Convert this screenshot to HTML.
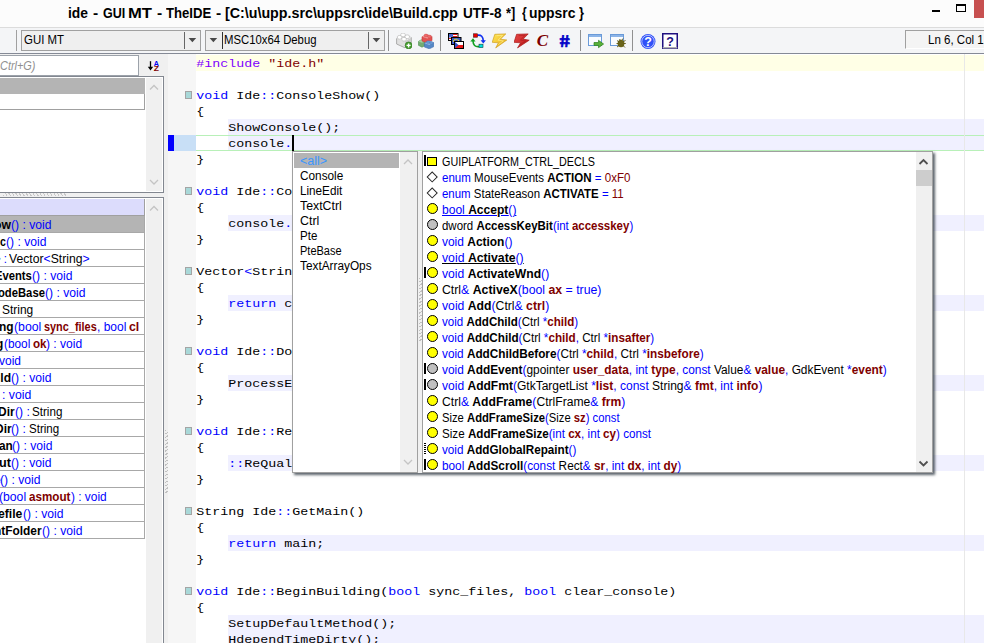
<!DOCTYPE html><html><head><meta charset="utf-8"><title>TheIDE</title><style>
*{box-sizing:border-box;margin:0;padding:0}
html,body{width:984px;height:643px;overflow:hidden;background:#fff}
body{position:relative;font-family:"Liberation Sans",sans-serif;font-size:12px;color:#000}
.abs{position:absolute}
.t{position:absolute;white-space:pre;line-height:16px;font-size:12px;transform-origin:0 0}
.t b{font-weight:bold}
.w{display:inline-block;vertical-align:top;white-space:pre;height:1px;overflow:visible}
.wi{display:inline-block;transform-origin:0 0;white-space:pre}
.code{font-family:"Liberation Mono",monospace;font-size:13.33px;line-height:16px;position:absolute;white-space:pre;left:196.3px;height:16px;color:#000;transform-origin:0 11.55px;transform:scaleY(.83);margin-top:.5px}
.kw{color:#0000ff}
.pp{color:#8000ff}
.str{color:#800000}
.hl{position:absolute;left:228px;right:0;height:16px;background:#f0f0ff}
.fold{position:absolute;left:185px;width:7px;height:8px;background:#a8d8d8;border:1px solid #a4a4a4}
.rowbg{position:absolute;left:-2px;width:147px;height:17px;border-bottom:1px solid #a8a8a8;border-right:1px solid #a8a8a8;background:#fff}
.clip{position:absolute;left:0;top:197px;width:144px;height:446px;overflow:hidden}
.bl{color:#0000ff}
.rd{color:#800000}
.ic{position:absolute;border-radius:50%;width:11px;height:11px;border:1px solid #000;left:427px}
.y{background:#ffff00}
.g{background:#c0c0c0}
.bar{position:absolute;left:424px;width:2px;height:11px;background:#000}
</style></head><body>
<div class="abs" style="left:0;top:0;width:984px;height:27px;background:#fcfcfc"></div>
<div class="t" style="left:68.00px;top:4.30px;font-size:14px;font-weight:bold;line-height:18px"><span class="w" style="width:20.00px"><span class="wi" id="f1" style="transform:scaleX(0.9884)">ide</span></span><span class="w" style="width:5.30px"> </span><span class="w" style="width:5.20px"><span class="wi" id="f2" style="transform:scaleX(1.1130)">-</span></span><span class="w" style="width:4.70px"> </span><span class="w" style="width:22.30px"><span class="wi" id="f3" style="transform:scaleX(0.8959)">GUI</span></span><span class="w" style="width:2.50px"> </span><span class="w" style="width:24.00px"><span class="wi" id="f4" style="transform:scaleX(1.1870)">MT</span></span><span class="w" style="width:5.00px"> </span><span class="w" style="width:5.20px"><span class="wi" id="f5" style="transform:scaleX(1.1130)">-</span></span><span class="w" style="width:4.10px"> </span><span class="w" style="width:45.20px"><span class="wi" id="f6" style="transform:scaleX(0.9371)">TheIDE</span></span><span class="w" style="width:4.30px"> </span><span class="w" style="width:5.20px"><span class="wi" id="f7" style="transform:scaleX(1.1130)">-</span></span><span class="w" style="width:4.50px"> </span><span class="w" style="width:232.80px"><span class="wi" id="f8" style="transform:scaleX(1.0180)">[C:\u\upp.src\uppsrc\ide\Build.cpp</span></span><span class="w" style="width:4.70px"> </span><span class="w" style="width:38.50px"><span class="wi" id="f9" style="transform:scaleX(0.9705)">UTF-8</span></span><span class="w" style="width:5.00px"> </span><span class="w" style="width:9.20px"><span class="wi" id="f10" style="transform:scaleX(0.9086)">*]</span></span><span class="w" style="width:6.30px"> </span><span class="w" style="width:4.70px"><span class="wi" id="f11" style="transform:scaleX(0.8619)">{</span></span><span class="w" style="width:2.60px"> </span><span class="w" style="width:46.40px"><span class="wi" id="f12" style="transform:scaleX(0.9938)">uppsrc</span></span><span class="w" style="width:3.80px"> </span><span class="w" style="width:5.00px"><span class="wi" id="f13" style="transform:scaleX(0.9169)">}</span></span></div>
<div class="abs" style="left:932px;top:10px;width:8px;height:2px;background:#000"></div>
<div class="abs" style="left:956px;top:4px;width:10px;height:8px;border:1px solid #000;border-top-width:2px"></div>
<div class="abs" style="left:974px;top:0;width:10px;height:18px;background:#c75050"></div>
<div class="abs" style="left:0;top:27px;width:984px;height:27px;background:#f4f5f7;border-top:1px solid #dcdcdc"></div>
<div class="abs" style="left:0;top:53px;width:984px;height:1px;background:#858a96"></div>
<div class="abs" style="left:16px;top:30px;width:1px;height:21px;background:#a0a0a0"></div>
<div class="abs" style="left:21px;top:30px;width:180px;height:21px;border:1px solid #a0a0a0;background:#efefef"></div>
<div class="t" id="f14" style="left:23.60px;top:32.00px;transform:scaleX(0.9143);font-size:12.5px">GUI MT</div>
<div class="abs" style="left:184px;top:32px;width:1px;height:17px;background:#666"></div>
<svg class="abs" style="left:188px;top:37px" width="9" height="6" viewBox="0 0 9 6"><path d="M.6 .9h7.6L4.4 5.2z" fill="#4a4a4a"/></svg>
<div class="abs" style="left:205px;top:30px;width:180px;height:21px;border:1px solid #a0a0a0;background:#efefef"></div>
<svg class="abs" style="left:209px;top:37px" width="9" height="6" viewBox="0 0 9 6"><path d="M.6 .9h7.6L4.4 5.2z" fill="#4a4a4a"/></svg>
<div class="abs" style="left:222px;top:32px;width:1px;height:17px;background:#303030"></div>
<div class="t" id="f15" style="left:224.00px;top:32.00px;transform:scaleX(0.9055);font-size:12.5px">MSC10x64 Debug</div>
<div class="abs" style="left:368px;top:32px;width:1px;height:17px;background:#666"></div>
<svg class="abs" style="left:371.6px;top:37px" width="9" height="6" viewBox="0 0 9 6"><path d="M.6 .9h7.6L4.4 5.2z" fill="#4a4a4a"/></svg>
<div class="abs" style="left:388px;top:30px;width:1px;height:21px;background:#909090"></div>
<div class="abs" style="left:440px;top:30px;width:1px;height:21px;background:#909090"></div>
<div class="abs" style="left:580px;top:30px;width:1px;height:21px;background:#909090"></div>
<div class="abs" style="left:632px;top:30px;width:1px;height:21px;background:#909090"></div>
<svg class="abs" style="left:396px;top:33px" width="16" height="16" viewBox="0 0 16 16"><path d="M.6 5.6 6.6 2.2 15.4 4.6 15.4 10 9 14.8 .6 11z" fill="#e0e0e0" stroke="#a4a4a4" stroke-width=".9"/><path d="M.6 5.6 6.6 2.2 15.4 4.6 9 8.6z" fill="#f2f2f2"/><path d="M9 8.6 15.4 4.6 15.4 10 9 14.8z" fill="#cdcdcd"/><g fill="#fff" stroke="#b0b0b0" stroke-width=".6"><path d="M4.8 2.6v-1.3a2.2 1.2 0 0 1 4.4 0v1.3a2.2 1.2 0 0 1-4.4 0z"/><path d="M1.4 5v-1.3a2.2 1.2 0 0 1 4.4 0V5a2.2 1.2 0 0 1-4.4 0z"/><path d="M9 4.4v-1.3a2.2 1.2 0 0 1 4.4 0v1.3a2.2 1.2 0 0 1-4.4 0z"/><path d="M5.8 6.9v-1.3a2.2 1.2 0 0 1 4.4 0v1.3a2.2 1.2 0 0 1-4.4 0z"/></g><circle cx="12.6" cy="12.4" r="3.4" fill="#48a030" stroke="#2f7a20" stroke-width=".7"/><path d="M10.6 12.4h4M12.6 10.4v4" stroke="#fff" stroke-width="1.4"/></svg>
<svg class="abs" style="left:418px;top:33px" width="16" height="16" viewBox="0 0 16 16"><path d="M.3 8.6 3.2 6.8 7 8.2 7 12.6 4 14.2 .3 12.2z" fill="#74ac72" stroke="#4f8f50" stroke-width=".6"/><path d="M.3 8.6 3.2 6.8 7 8.2 4 9.8z" fill="#a4d0a0"/><path d="M4 3.8 8.6 1.6 14 3.4 14 7.6 9.4 10 4 8z" fill="#e25252" stroke="#c03c3c" stroke-width=".6"/><path d="M4 3.8 8.6 1.6 14 3.4 9.4 5.6z" fill="#f29a9a"/><path d="M6.2 3v-1a1.7 .9 0 0 1 3.4 0v1a1.7 .9 0 0 1-3.4 0zM9.6 4v-1a1.7 .9 0 0 1 3.4 0v1a1.7 .9 0 0 1-3.4 0z" fill="#f06a6a" stroke="#c84444" stroke-width=".4"/><path d="M6.4 10.2 11 8 15.8 9.6 15.8 13.6 11.4 15.8 6.4 14z" fill="#5688c6" stroke="#3c6cab" stroke-width=".6"/><path d="M6.4 10.2 11 8 15.8 9.6 11.4 12z" fill="#94bae6"/><path d="M8.4 9.6v-.9a1.6 .8 0 0 1 3.2 0v.9a1.6 .8 0 0 1-3.2 0zM11.6 10.6v-.9a1.6 .8 0 0 1 3.2 0v.9a1.6 .8 0 0 1-3.2 0z" fill="#6a9ad6" stroke="#4474b0" stroke-width=".4"/></svg>
<svg class="abs" style="left:448px;top:33px" width="16" height="16" viewBox="0 0 16 16"><rect x=".5" y=".5" width="9.5" height="7" fill="#fff" stroke="#000"/><rect x="1" y="1" width="4" height="3.5" fill="#3050c8"/><path d="M1.5 2h3M1.5 3.4h3" stroke="#dfe6ff" stroke-width=".6" stroke-dasharray=".7 .6"/><rect x="5" y="1" width="4.5" height="1" fill="#e02020"/><rect x="5" y="3" width="4.5" height="1" fill="#e02020"/><rect x="1" y="5" width="8.5" height="1" fill="#e02020"/><rect x="3.5" y="4.5" width="9.5" height="7" fill="#3858c8" stroke="#000"/><path d="M5.3 8.6 Q8.2 3.6 11.3 8.6" fill="none" stroke="#f4e428" stroke-width="1.3" stroke-dasharray="1.3 .7"/><rect x="6.5" y="8.5" width="9" height="7" fill="#fff" stroke="#000"/><rect x="7" y="12" width="8" height="3" fill="#e81818"/><path d="M7 9 10.5 12 7 15z" fill="#3050c8"/></svg>
<svg class="abs" style="left:470px;top:33px" width="16" height="16" viewBox="0 0 16 16"><path d="M7.5 2.2 Q13 1.5 13.3 8" fill="none" stroke="#1030f0" stroke-width="1.6"/><path d="M10.6 7.2 13.3 10.6 15.9 7.2z" fill="#1030f0"/><path d="M9 13.6 Q3.2 14.2 3 8" fill="none" stroke="#10a020" stroke-width="1.6"/><path d="M.3 8.6 3 5.2 5.6 8.6z" fill="#10a020"/><rect x="3.5" y=".8" width="4" height="3.4" fill="#f00000" stroke="#401010" stroke-width=".6"/><rect x="9" y="11.2" width="4" height="3.4" fill="#00e0e0" stroke="#104040" stroke-width=".6"/></svg>
<svg class="abs" style="left:492px;top:33px" width="16" height="16" viewBox="0 0 16 16"><defs><linearGradient id="gy" x1="0" y1="0" x2="1" y2="1"><stop offset="0" stop-color="#ffe858"/><stop offset="1" stop-color="#e8a818"/></linearGradient></defs><path d="M2.8 1.3 13.8 .9 8.4 6.2 14.8 7 3.7 14.9 6.4 9.8 .2 9.3z" fill="url(#gy)" stroke="#d0a020" stroke-width=".7"/><path d="M4.6 2.6 10.6 2.4 6 7.2 11.4 7.9 6.2 11.6" fill="none" stroke="#fff4a0" stroke-width=".7" opacity=".8"/></svg>
<svg class="abs" style="left:514px;top:33px" width="16" height="16" viewBox="0 0 16 16"><defs><linearGradient id="gr" x1="0" y1="0" x2="1" y2="1"><stop offset="0" stop-color="#e84848"/><stop offset="1" stop-color="#b81818"/></linearGradient></defs><path d="M2.6 1.3 14.2 .9 9.1 6.1 15.2 7.2 3.5 14.9 6.6 9.8 0 9.3z" fill="url(#gr)" stroke="#a81818" stroke-width=".7"/><path d="M4.6 2.6 10.8 2.4 6.4 7.2 11.8 8 6.2 11.6" fill="none" stroke="#a01010" stroke-width=".6" opacity=".7"/></svg>
<div class="abs" style="left:536.7px;top:30.7px;font-family:'Liberation Serif',serif;font-weight:bold;font-style:italic;font-size:17px;line-height:20px;color:#7c0000">C</div>
<div class="abs" style="left:559.9px;top:31.8px;font-family:'Liberation Sans',sans-serif;font-weight:bold;font-size:17px;line-height:20px;color:#0000c8;-webkit-text-stroke:.6px #0000c8;transform:skewX(8deg) scaleX(1.1);transform-origin:50% 50%">#</div>
<svg class="abs" style="left:588px;top:33px" width="16" height="16" viewBox="0 0 16 16"><rect x=".5" y="1.5" width="13" height="11" fill="#fafcff" stroke="#6a9ad8"/><rect x="1" y="2" width="12" height="2" fill="#8cb4e8"/><path d="M6 9.5h4.5V7.3L15.6 11l-5.1 3.7v-2.2H6z" fill="#58b038" stroke="#2c8020" stroke-width=".7"/></svg>
<svg class="abs" style="left:610px;top:33px" width="16" height="16" viewBox="0 0 16 16"><rect x=".5" y="1.5" width="13" height="11" fill="#fafcff" stroke="#6a9ad8"/><rect x="1" y="2" width="12" height="2" fill="#8cb4e8"/><ellipse cx="11" cy="10.5" rx="3.4" ry="3.8" fill="#6a6418"/><path d="M7 7.5l2 1.5M15.5 7l-2 2M6.5 10.5h2M13.5 10.5h2.3M7 14l2-1.5M15 14.5l-2-2M9.5 6l1 1.5M13 5.5l-1 1.5" stroke="#5a5410" stroke-width=".9" fill="none"/></svg>
<svg class="abs" style="left:640px;top:32.5px" width="16" height="17" viewBox="0 0 16 17"><circle cx="8" cy="8.5" r="7.5" fill="#3050f8"/><circle cx="8" cy="8.5" r="6.2" fill="none" stroke="#e8ecff" stroke-width=".7"/><text x="8" y="13" text-anchor="middle" font-family="Liberation Sans,sans-serif" font-weight="bold" font-size="12.5" fill="#fff">?</text></svg>
<svg class="abs" style="left:662px;top:33px" width="16" height="16" viewBox="0 0 16 16"><rect x=".75" y=".75" width="14.5" height="14.5" fill="#fff" stroke="#201080" stroke-width="1.5"/><rect x=".75" y="14" width="14.5" height="1.5" fill="#b0b0b0"/><text x="8" y="12.6" text-anchor="middle" font-family="Liberation Sans,sans-serif" font-weight="bold" font-size="12.5" fill="#201080">?</text></svg>

<div class="abs" style="left:905px;top:30px;width:90px;height:19px;border:1px solid #a0a0a0;border-right:0;border-bottom-color:#fff;background:#f4f4f4"></div>
<div class="t" id="f16" style="left:927.50px;top:31.50px;transform:scaleX(0.9225);font-size:12.5px">Ln 6, Col 12</div>
<div class="abs" style="left:0;top:54px;width:168px;height:589px;background:#f0f0f0"></div>
<div class="abs" style="left:-2px;top:55px;width:141px;height:21px;border:1px solid #9ca2aa;background:#fff"></div>
<div class="t" id="f17" style="left:-0.50px;top:57.50px;transform:scaleX(0.9103);font-style:italic;color:#909090">Ctrl+G)</div>
<svg class="abs" style="left:147px;top:59.7px" width="14" height="12" viewBox="0 0 14 12"><path d="M3.5 1.2v8" stroke="#000" stroke-width="1.3"/><path d="M.8 6.8 3.5 10.4 6.2 6.8z" fill="#000"/><text x="6.8" y="5.6" font-family="Liberation Sans,sans-serif" font-weight="bold" font-size="6.8" fill="#0000f0" textLength="5.2" lengthAdjust="spacingAndGlyphs">A</text><text x="6.8" y="10.9" font-family="Liberation Sans,sans-serif" font-weight="bold" font-size="6.8" fill="#800000" textLength="5.2" lengthAdjust="spacingAndGlyphs">Z</text></svg>

<div class="abs" style="left:-2px;top:76px;width:166px;height:117px;border:1px solid #828790;background:#fff"></div>
<div class="abs" style="left:0;top:78px;width:145px;height:16px;background:#b4b4b4"></div>
<div class="abs" style="left:-2px;top:94px;width:147px;height:16px;border:1px solid #a0a0a0;border-top:0;background:#fff"></div>
<div class="abs" style="left:146px;top:78px;width:16px;height:113px;background:#f0f0f0"></div>
<div class="abs" style="left:3px;top:193px;width:63px;height:3px;background:repeating-linear-gradient(60deg,#c8c8c8 0 1px,transparent 1px 3px)"></div>
<div class="abs" style="left:-2px;top:197px;width:166px;height:450px;border:1px solid #828790;background:#fff"></div>
<div class="abs" style="left:146px;top:199px;width:16px;height:445px;background:#f0f0f0"></div>
<div class="abs" style="left:-2px;top:199px;width:147px;height:17px;background:#dcdcfc;border-right:1px solid #a0a0a0;border-bottom:1px solid #a0a0a0"></div>
<div class="rowbg" style="top:216px;background:#b4b4b4"></div>
<div class="rowbg" style="top:233px"></div>
<div class="rowbg" style="top:250px"></div>
<div class="rowbg" style="top:267px"></div>
<div class="rowbg" style="top:284px"></div>
<div class="rowbg" style="top:301px"></div>
<div class="rowbg" style="top:318px"></div>
<div class="rowbg" style="top:335px"></div>
<div class="rowbg" style="top:352px"></div>
<div class="rowbg" style="top:369px"></div>
<div class="rowbg" style="top:386px"></div>
<div class="rowbg" style="top:403px"></div>
<div class="rowbg" style="top:420px"></div>
<div class="rowbg" style="top:437px"></div>
<div class="rowbg" style="top:454px"></div>
<div class="rowbg" style="top:471px"></div>
<div class="rowbg" style="top:488px"></div>
<div class="rowbg" style="top:505px"></div>
<div class="rowbg" style="top:522px"></div>
<div class="clip">
<div class="t" style="left:-5.80px;top:20.00px;"><span class="w" style="width:16.90px"><span class="wi" id="f18" style="transform:scaleX(1.0137)"><b>ow</b></span></span><span class="w" style="width:40.40px"><span class="wi" id="f19" style="transform:scaleX(1.0096)"><span class="bl">() : void</span></span></span></div>
<div class="t" style="left:0.20px;top:37.00px;"><span class="w" style="width:5.90px"><span class="wi" id="f20" style="transform:scaleX(0.8822)"><b>c</b></span></span><span class="w" style="width:40.40px"><span class="wi" id="f21" style="transform:scaleX(1.0096)"><span class="bl">() : void</span></span></span></div>
<div class="t" style="left:-6.50px;top:54.00px;"><span class="w" style="width:13.00px"><span class="wi" id="f22" style="transform:scaleX(0.9498)"><span class="bl">&gt; :</span></span></span><span class="w" style="width:2.80px"> </span><span class="w" style="width:80.70px"><span class="wi" id="f23" style="transform:scaleX(1.0161)">Vector<span class="bl">&lt;</span>String<span class="bl">&gt;</span></span></span></div>
<div class="t" style="left:-5.20px;top:71.00px;"><span class="w" style="width:36.80px"><span class="wi" id="f24" style="transform:scaleX(0.9350)"><b>Events</b></span></span><span class="w" style="width:40.40px"><span class="wi" id="f25" style="transform:scaleX(1.0096)"><span class="bl">() : void</span></span></span></div>
<div class="t" style="left:-2.30px;top:88.00px;"><span class="w" style="width:46.90px"><span class="wi" id="f26" style="transform:scaleX(0.9374)"><b>odeBase</b></span></span><span class="w" style="width:40.40px"><span class="wi" id="f27" style="transform:scaleX(1.0096)"><span class="bl">() : void</span></span></span></div>
<div class="t" style="left:1.80px;top:105.00px;"><span class="w" style="width:31.20px"><span class="wi" id="f28" style="transform:scaleX(0.9949)">String</span></span></div>
<div class="t" style="left:-0.60px;top:122.00px;"><span class="w" style="width:14.60px"><span class="wi" id="f29" style="transform:scaleX(0.9951)"><b>ng</b></span></span><span class="w" style="width:27.30px"><span class="wi" id="f30" style="transform:scaleX(1.0230)"><span class="bl">(bool</span></span></span><span class="w" style="width:3.00px"> </span><span class="w" style="width:52.70px"><span class="wi" id="f31" style="transform:scaleX(0.9079)"><b class="rd">sync_files</b></span></span><span class="w" style="width:29.30px"><span class="wi" id="f32" style="transform:scaleX(0.9980)"><span class="bl">, bool</span></span></span><span class="w" style="width:3.00px"> </span><span class="w" style="width:10.30px"><span class="wi" id="f33" style="transform:scaleX(1.0284)"><b class="rd">cl</b></span></span></div>
<div class="t" style="left:-3.60px;top:139.00px;"><span class="w" style="width:7.30px"><span class="wi" id="f34" style="transform:scaleX(0.9940)"><b>g</b></span></span><span class="w" style="width:26.30px"><span class="wi" id="f35" style="transform:scaleX(0.9855)"><span class="bl">(bool</span></span></span><span class="w" style="width:2.70px"> </span><span class="w" style="width:13.60px"><span class="wi" id="f36" style="transform:scaleX(0.9703)"><b class="rd">ok</b></span></span><span class="w" style="width:36.20px"><span class="wi" id="f37" style="transform:scaleX(1.0051)"><span class="bl">) : void</span></span></span></div>
<div class="t" style="left:-1.00px;top:156.00px;"><span class="w" style="width:22.00px"><span class="wi" id="f38" style="transform:scaleX(0.9993)"><span class="bl">void</span></span></span></div>
<div class="t" style="left:-3.50px;top:173.00px;"><span class="w" style="width:14.10px"><span class="wi" id="f39" style="transform:scaleX(1.0071)"><b>ild</b></span></span><span class="w" style="width:40.40px"><span class="wi" id="f40" style="transform:scaleX(1.0096)"><span class="bl">() : void</span></span></span></div>
<div class="t" style="left:1.50px;top:190.00px;"><span class="w" style="width:29.30px"><span class="wi" id="f41" style="transform:scaleX(1.0214)"><span class="bl">: void</span></span></span></div>
<div class="t" style="left:-1.90px;top:207.00px;"><span class="w" style="width:16.60px"><span class="wi" id="f42" style="transform:scaleX(0.9957)"><b>Dir</b></span></span><span class="w" style="width:14.80px"><span class="wi" id="f43" style="transform:scaleX(1.0087)"><span class="bl">() :</span></span></span><span class="w" style="width:2.80px"> </span><span class="w" style="width:30.40px"><span class="wi" id="f44" style="transform:scaleX(0.9694)">String</span></span></div>
<div class="t" style="left:-5.40px;top:224.00px;"><span class="w" style="width:16.60px"><span class="wi" id="f45" style="transform:scaleX(0.9957)"><b>Dir</b></span></span><span class="w" style="width:14.80px"><span class="wi" id="f46" style="transform:scaleX(1.0087)"><span class="bl">() :</span></span></span><span class="w" style="width:2.80px"> </span><span class="w" style="width:30.20px"><span class="wi" id="f47" style="transform:scaleX(0.9630)">String</span></span></div>
<div class="t" style="left:-1.50px;top:241.00px;"><span class="w" style="width:13.80px"><span class="wi" id="f48" style="transform:scaleX(0.9846)"><b>an</b></span></span><span class="w" style="width:40.40px"><span class="wi" id="f49" style="transform:scaleX(1.0096)"><span class="bl">() : void</span></span></span></div>
<div class="t" style="left:-1.30px;top:258.00px;"><span class="w" style="width:11.90px"><span class="wi" id="f50" style="transform:scaleX(1.0505)"><b>ut</b></span></span><span class="w" style="width:40.40px"><span class="wi" id="f51" style="transform:scaleX(1.0096)"><span class="bl">() : void</span></span></span></div>
<div class="t" style="left:-6.20px;top:275.00px;"><span class="w" style="width:6.60px"><span class="wi" id="f52" style="transform:scaleX(0.9869)"><b>e</b></span></span><span class="w" style="width:40.40px"><span class="wi" id="f53" style="transform:scaleX(1.0096)"><span class="bl">() : void</span></span></span></div>
<div class="t" style="left:-0.60px;top:292.00px;"><span class="w" style="width:27.10px"><span class="wi" id="f54" style="transform:scaleX(1.0155)"><span class="bl">(bool</span></span></span><span class="w" style="width:2.50px"> </span><span class="w" style="width:41.50px"><span class="wi" id="f55" style="transform:scaleX(0.9722)"><b class="rd">asmout</b></span></span><span class="w" style="width:35.70px"><span class="wi" id="f56" style="transform:scaleX(0.9912)"><span class="bl">) : void</span></span></span></div>
<div class="t" style="left:-1.60px;top:309.00px;"><span class="w" style="width:24.40px"><span class="wi" id="f57" style="transform:scaleX(1.0160)"><b>efile</b></span></span><span class="w" style="width:40.40px"><span class="wi" id="f58" style="transform:scaleX(1.0096)"><span class="bl">() : void</span></span></span></div>
<div class="t" style="left:-5.90px;top:326.00px;"><span class="w" style="width:47.60px"><span class="wi" id="f59" style="transform:scaleX(0.9917)"><b>ntFolder</b></span></span><span class="w" style="width:40.40px"><span class="wi" id="f60" style="transform:scaleX(1.0096)"><span class="bl">() : void</span></span></span></div>
</div>
<div class="abs" style="left:196px;top:54px;width:788px;height:589px;background:#fff"></div>
<div class="abs" style="left:165px;top:430px;width:3px;height:63px;background:repeating-linear-gradient(150deg,#c0c0c0 0 1px,transparent 1px 3px)"></div>
<div class="abs" style="left:168px;top:54px;width:28px;height:589px;background:#f6f6f6"></div>
<div class="abs" style="left:196px;top:55px;width:788px;height:16px;background:#ffffe6"></div>
<div class="code" style="top:55px"><span class="pp">#include</span> <span class="str">"ide.h"</span></div>
<div class="fold" style="top:91px"></div>
<div class="code" style="top:87px"><span class="kw">void</span> Ide<span class="kw">::</span>ConsoleShow()</div>
<div class="code" style="top:103px">{</div>
<div class="hl" style="top:119px"></div>
<div class="code" style="top:119px">    ShowConsole();</div>
<div class="hl" style="top:135px"></div>
<div class="code" style="top:135px">    console<span class="kw">.</span></div>
<div class="code" style="top:151px">}</div>
<div class="fold" style="top:187px"></div>
<div class="code" style="top:183px"><span class="kw">void</span> Ide<span class="kw">::</span>Co</div>
<div class="code" style="top:199px">{</div>
<div class="hl" style="top:215px"></div>
<div class="code" style="top:215px">    console<span class="kw">.</span></div>
<div class="code" style="top:231px">}</div>
<div class="fold" style="top:267px"></div>
<div class="code" style="top:263px">Vector<span class="kw">&lt;</span>Strin</div>
<div class="code" style="top:279px">{</div>
<div class="hl" style="top:295px"></div>
<div class="code" style="top:295px">    <span class="kw">return</span> c</div>
<div class="code" style="top:311px">}</div>
<div class="fold" style="top:347px"></div>
<div class="code" style="top:343px"><span class="kw">void</span> Ide<span class="kw">::</span>Do</div>
<div class="code" style="top:359px">{</div>
<div class="hl" style="top:375px"></div>
<div class="code" style="top:375px">    ProcessE</div>
<div class="code" style="top:391px">}</div>
<div class="fold" style="top:427px"></div>
<div class="code" style="top:423px"><span class="kw">void</span> Ide<span class="kw">::</span>Re</div>
<div class="code" style="top:439px">{</div>
<div class="hl" style="top:455px"></div>
<div class="code" style="top:455px">    <span class="kw">::</span>ReQual</div>
<div class="code" style="top:471px">}</div>
<div class="fold" style="top:507px"></div>
<div class="code" style="top:503px">String Ide<span class="kw">::</span>GetMain()</div>
<div class="code" style="top:519px">{</div>
<div class="hl" style="top:535px"></div>
<div class="code" style="top:535px">    <span class="kw">return</span> main;</div>
<div class="code" style="top:551px">}</div>
<div class="fold" style="top:587px"></div>
<div class="code" style="top:583px"><span class="kw">void</span> Ide<span class="kw">::</span>BeginBuilding(<span class="kw">bool</span> sync_files, <span class="kw">bool</span> clear_console)</div>
<div class="code" style="top:599px">{</div>
<div class="hl" style="top:615px"></div>
<div class="code" style="top:615px">    SetupDefaultMethod();</div>
<div class="hl" style="top:631px"></div>
<div class="code" style="top:631px">    HdependTimeDirty();</div>
<div class="abs" style="left:196px;top:135px;width:788px;height:1px;background:#b8f0b8"></div>
<div class="abs" style="left:196px;top:150px;width:788px;height:1px;background:#b8f0b8"></div>
<div class="abs" style="left:174px;top:135px;width:22px;height:16px;background:#c8dff6"></div>
<div class="abs" style="left:168px;top:135px;width:6px;height:16px;background:#0000ff"></div>
<div class="abs" style="left:292px;top:135px;width:2px;height:16px;background:#000"></div>
<div class="abs" style="left:964px;top:54px;width:1px;height:589px;background:#e8e8e8"></div>
<div class="abs" style="left:292px;top:151px;width:641px;height:322px;background:#f0f0f0;box-shadow:2px 2px 2.5px rgba(50,60,70,.8)"></div>
<div class="abs" style="left:292px;top:151px;width:126px;height:322px;background:#fff;border:1px solid #a0a0a0"></div>
<div class="abs" style="left:400px;top:152px;width:17px;height:320px;background:#f0f0f0"></div>
<div class="abs" style="left:294px;top:153px;width:105px;height:15px;background:#b4b4b4"></div>
<div class="abs" style="left:419px;top:278px;width:3px;height:63px;background:repeating-linear-gradient(150deg,#c0c0c0 0 1px,transparent 1px 3px)"></div>
<div class="t" id="f61" style="left:300.20px;top:154.00px;transform:scaleX(1.0372);line-height:15px"><span style="color:#3a96ff">&lt;all&gt;</span></div>
<div class="t" id="f62" style="left:300.20px;top:169.00px;transform:scaleX(0.9834);line-height:15px">Console</div>
<div class="t" id="f63" style="left:300.20px;top:184.00px;transform:scaleX(0.9752);line-height:15px">LineEdit</div>
<div class="t" id="f64" style="left:300.20px;top:199.00px;transform:scaleX(1.0277);line-height:15px">TextCtrl</div>
<div class="t" id="f65" style="left:300.20px;top:214.00px;transform:scaleX(1.0336);line-height:15px">Ctrl</div>
<div class="t" id="f66" style="left:300.20px;top:229.00px;transform:scaleX(0.9603);line-height:15px">Pte</div>
<div class="t" id="f67" style="left:300.20px;top:244.00px;transform:scaleX(0.9168);line-height:15px">PteBase</div>
<div class="t" id="f68" style="left:300.20px;top:259.00px;transform:scaleX(0.9850);line-height:15px">TextArrayOps</div>
<div class="abs" style="left:422px;top:151px;width:511px;height:322px;background:#fff;border:1px solid #a0a0a0"></div>
<div class="abs" style="left:916px;top:152px;width:16px;height:320px;background:#f0f0f0"></div>
<div class="abs" style="left:916px;top:170px;width:16px;height:16px;background:#cdcdcd"></div>
<div class="abs" style="left:427px;top:157px;width:10px;height:9px;background:#ffff00;border:1px solid #000"></div>
<div class="bar" style="top:155px"></div>
<div class="t" id="f69" style="left:441.80px;top:154.00px;transform:scaleX(0.8974);">GUIPLATFORM_CTRL_DECLS</div>
<div class="abs" style="left:428.2px;top:173.2px;width:8.4px;height:8.4px;background:#fff;border:1.1px solid #282828;transform:rotate(45deg)"></div>
<div class="t" id="f70" style="left:441.80px;top:170.00px;transform:scaleX(0.9622);"><span class="bl">enum</span> MouseEvents <b>ACTION</b> <span class="bl">=</span> <span class="rd">0xF0</span></div>
<div class="abs" style="left:428.2px;top:189.2px;width:8.4px;height:8.4px;background:#fff;border:1.1px solid #282828;transform:rotate(45deg)"></div>
<div class="t" id="f71" style="left:441.80px;top:186.00px;transform:scaleX(0.9539);"><span class="bl">enum</span> StateReason <b>ACTIVATE</b> <span class="bl">=</span> <span class="rd">11</span></div>
<div class="ic y" style="top:203px"></div>
<div class="t" id="f72" style="left:441.80px;top:202.00px;transform:scaleX(1.0048);"><span class="bl" style="text-decoration:underline">bool <b style="color:#000">Accept</b>()</span></div>
<div class="ic g" style="top:219px"></div>
<div class="t" id="f73" style="left:441.80px;top:218.00px;transform:scaleX(0.9552);">dword <b>AccessKeyBit</b><span class="bl">(int <b class="rd">accesskey</b>)</span></div>
<div class="ic y" style="top:235px"></div>
<div class="t" id="f74" style="left:441.80px;top:234.00px;transform:scaleX(0.9957);"><span class="bl">void</span> <b>Action</b><span class="bl">()</span></div>
<div class="ic y" style="top:251px"></div>
<div class="t" id="f75" style="left:441.80px;top:250.00px;transform:scaleX(1.0207);"><span style="text-decoration:underline"><span class="bl">void </span><b>Activate</b><span class="bl">()</span></span></div>
<div class="ic y" style="top:267px"></div>
<div class="bar" style="top:267px"></div>
<div class="t" id="f76" style="left:441.80px;top:266.00px;transform:scaleX(1.0109);"><span class="bl">void</span> <b>ActivateWnd</b><span class="bl">()</span></div>
<div class="ic y" style="top:283px"></div>
<div class="t" id="f77" style="left:441.80px;top:282.00px;transform:scaleX(1.0230);">Ctrl<span class="bl">&amp;</span> <b>ActiveX</b><span class="bl">(bool <b class="rd">ax</b> = true)</span></div>
<div class="ic y" style="top:299px"></div>
<div class="t" id="f78" style="left:441.80px;top:298.00px;transform:scaleX(1.0170);"><span class="bl">void</span> <b>Add</b><span class="bl">(</span>Ctrl<span class="bl">&amp;</span> <b class="rd">ctrl</b><span class="bl">)</span></div>
<div class="ic y" style="top:315px"></div>
<div class="t" id="f79" style="left:441.80px;top:314.00px;transform:scaleX(0.9634);"><span class="bl">void</span> <b>AddChild</b><span class="bl">(</span>Ctrl <span class="bl">*</span><b class="rd">child</b><span class="bl">)</span></div>
<div class="ic y" style="top:331px"></div>
<div class="t" id="f80" style="left:441.80px;top:330.00px;transform:scaleX(0.9730);"><span class="bl">void</span> <b>AddChild</b><span class="bl">(</span>Ctrl <span class="bl">*</span><b class="rd">child</b><span class="bl">,</span> Ctrl <span class="bl">*</span><b class="rd">insafter</b><span class="bl">)</span></div>
<div class="ic y" style="top:347px"></div>
<div class="t" id="f81" style="left:441.80px;top:346.00px;transform:scaleX(0.9810);"><span class="bl">void</span> <b>AddChildBefore</b><span class="bl">(</span>Ctrl <span class="bl">*</span><b class="rd">child</b><span class="bl">,</span> Ctrl <span class="bl">*</span><b class="rd">insbefore</b><span class="bl">)</span></div>
<div class="ic g" style="top:363px"></div>
<div class="bar" style="top:363px"></div>
<div class="t" id="f82" style="left:441.80px;top:362.00px;transform:scaleX(0.9894);"><span class="bl">void</span> <b>AddEvent</b><span class="bl">(</span>gpointer <b class="rd">user_data</b><span class="bl">, int</span> <b class="rd">type</b><span class="bl">, const</span> Value<span class="bl">&amp;</span> <b class="rd">value</b><span class="bl">,</span> GdkEvent <span class="bl">*</span><b class="rd">event</b><span class="bl">)</span></div>
<div class="ic g" style="top:379px"></div>
<div class="bar" style="top:379px"></div>
<div class="t" id="f83" style="left:441.80px;top:378.00px;transform:scaleX(1.0031);"><span class="bl">void</span> <b>AddFmt</b><span class="bl">(</span>GtkTargetList <span class="bl">*</span><b class="rd">list</b><span class="bl">, const</span> String<span class="bl">&amp;</span> <b class="rd">fmt</b><span class="bl">, int</span> <b class="rd">info</b><span class="bl">)</span></div>
<div class="ic y" style="top:395px"></div>
<div class="t" id="f84" style="left:441.80px;top:394.00px;transform:scaleX(1.0109);">Ctrl<span class="bl">&amp;</span> <b>AddFrame</b><span class="bl">(</span>CtrlFrame<span class="bl">&amp;</span> <b class="rd">frm</b><span class="bl">)</span></div>
<div class="ic y" style="top:411px"></div>
<div class="t" id="f85" style="left:441.80px;top:410.00px;transform:scaleX(0.9370);">Size <b>AddFrameSize</b><span class="bl">(</span>Size <b class="rd">sz</b><span class="bl">) const</span></div>
<div class="ic y" style="top:427px"></div>
<div class="t" id="f86" style="left:441.80px;top:426.00px;transform:scaleX(0.9699);">Size <b>AddFrameSize</b><span class="bl">(int <b class="rd">cx</b>, int <b class="rd">cy</b>) const</span></div>
<div class="ic y" style="top:443px"></div>
<div class="bar" style="top:443px;background:repeating-linear-gradient(#000 0 1px,transparent 1px 2px)"></div>
<div class="t" id="f87" style="left:441.80px;top:442.00px;transform:scaleX(0.9737);"><span class="bl">void</span> <b>AddGlobalRepaint</b><span class="bl">()</span></div>
<div class="ic y" style="top:459px"></div>
<div class="bar" style="top:459px"></div>
<div class="t" id="f88" style="left:441.80px;top:458.00px;transform:scaleX(0.9823);"><span class="bl">bool</span> <b>AddScroll</b><span class="bl">(const</span> Rect<span class="bl">&amp;</span> <b class="rd">sr</b><span class="bl">, int <b class="rd">dx</b>, int <b class="rd">dy</b>)</span></div>
<svg class="abs" style="left:146px;top:77px" width="17" height="115" viewBox="0 0 17 115"><path d="M4 12.5 8 8.5 12 12.5M4 103 8 107 12 103" fill="none" stroke="#c4c4c4" stroke-width="1.3"/></svg>
<svg class="abs" style="left:146px;top:198px" width="17" height="20" viewBox="0 0 17 20"><path d="M4 12.5 8 8.5 12 12.5" fill="none" stroke="#c4c4c4" stroke-width="1.3"/></svg>
<svg class="abs" style="left:400px;top:152px;width:17px;height:320px" viewBox="0 0 17 320"><path d="M4 12 8 8 12 12M4 308 8 312 12 308" fill="none" stroke="#c4c4c4" stroke-width="1.3"/></svg>
<svg class="abs" style="left:915px;top:152px;width:17px;height:320px" viewBox="0 0 17 320"><path d="M4.5 12 8.5 8 12.5 12M4.5 309.5 8.5 313.5 12.5 309.5" fill="none" stroke="#505050" stroke-width="1.8"/></svg>

</body></html>
